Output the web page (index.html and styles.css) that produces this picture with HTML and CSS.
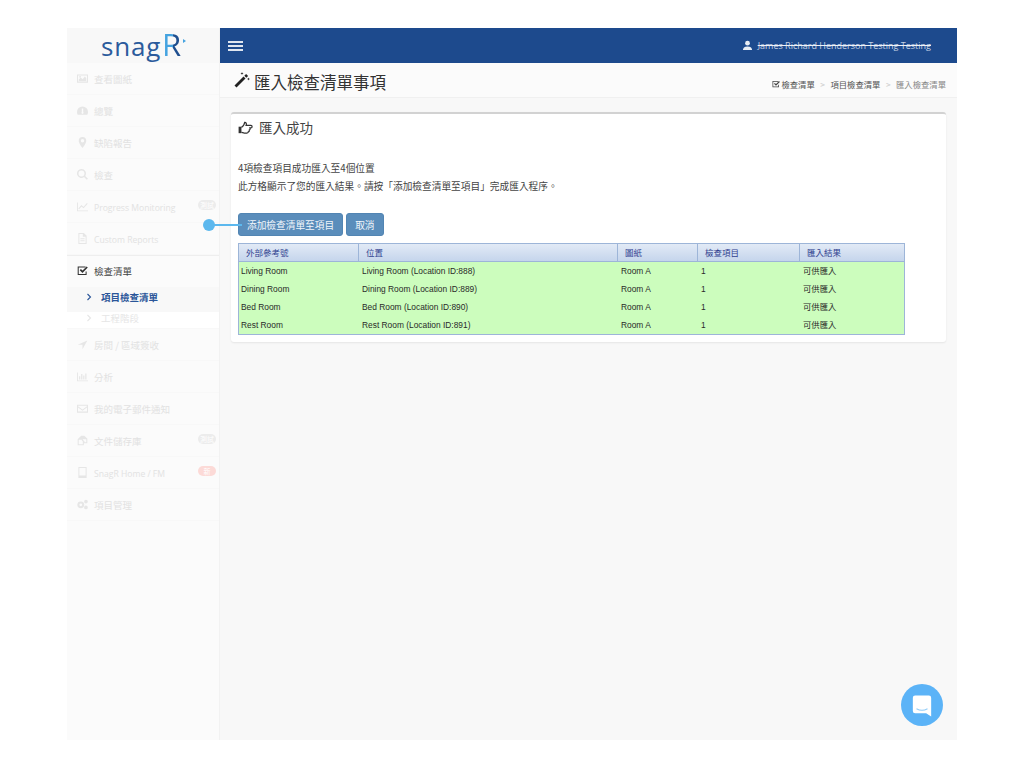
FILE: index.html
```html
<!DOCTYPE html>
<html lang="en">
<head>
    <meta charset="UTF-8">
    <meta name="viewport" content="width=device-width, initial-scale=1.0">
    <title>匯入檢查清單事項</title>
    <link rel="stylesheet" href="styles.css">
</head>
<body>
    <div class="app">
        <aside class="sidebar">
            <div class="logo">snag<span class="logo-r">R</span><span class="logo-arrow"></span></div>
            <ul class="menu">
                <li class="menu-item">
                    <svg class="icon" viewBox="0 0 16 16"><path d="M0 2h16v12H0zm1.500 1.500v9h13v-9z" fill-rule="evenodd"/><path d="M2.500 11.500v-2l3-3 2.500 2.500 3.500-4 2 2.500v4z"/><circle cx="4.500" cy="5.500" r="1.300"/></svg>
                    <span>查看圖紙</span>
                </li>
                <li class="menu-item">
                    <svg class="icon" viewBox="0 0 16 16"><path d="M8 2a8 8 0 0 0-8 8c0 1.500.4 2.800 1 4h14c.6-1.200 1-2.500 1-4a8 8 0 0 0-8-8zM7 5h2v5.200a1.500 1.500 0 1 1-2 0z" fill-rule="evenodd"/></svg>
                    <span>總覽</span>
                </li>
                <li class="menu-item">
                    <svg class="icon" viewBox="0 0 16 16"><path d="M8 0a5.500 5.500 0 0 0-5.500 5.500C2.500 9.500 8 16 8 16s5.500-6.500 5.500-10.500A5.500 5.500 0 0 0 8 0zm0 8a2.500 2.500 0 1 1 0-5 2.500 2.500 0 0 1 0 5z" fill-rule="evenodd"/></svg>
                    <span>缺陷報告</span>
                </li>
                <li class="menu-item">
                    <svg class="icon" viewBox="0 0 16 16"><path d="M6.500 0a6.500 6.500 0 1 0 3.700 11.800l4 4 1.800-1.800-4-4A6.500 6.500 0 0 0 6.500 0zm0 2.200a4.300 4.300 0 1 1 0 8.600 4.300 4.300 0 0 1 0-8.600z" fill-rule="evenodd"/></svg>
                    <span>檢查</span>
                </li>
                <li class="menu-item">
                    <svg class="icon" viewBox="0 0 16 16"><path d="M0 2h1.300v11.700H16V15H0z"/><path d="M2.500 11.500l4-4.500 3 2.500 5.500-6" fill="none" stroke="currentColor" stroke-width="1.500"/></svg>
                    <span class="latin">Progress Monitoring</span>
                    <span class="badge">測試</span>
                </li>
                <li class="menu-item">
                    <svg class="icon" viewBox="0 0 16 16"><path d="M2 0h8l4 4v12H2zm1.500 1.500v13h9V5.500H8.500v-4z" fill-rule="evenodd"/><path d="M5 7.500h6V9H5zM5 10.500h6V12H5z"/></svg>
                    <span class="latin">Custom Reports</span>
                </li>
                <li class="menu-item menu-open">
                    <svg class="icon" viewBox="0 0 16 16"><path d="M1 2h11.500v1.500h-10v9.500h10V9.500H14V14.500H1z"/><path d="M4 7.500l1.700-1.700 2.300 2.300 6-6L15.700 3.800 8 11.500z"/></svg>
                    <span>檢查清單</span>
                </li>
                <li class="sub-item sub-active">
                    <svg class="chevron" viewBox="0 0 8 8"><path d="M2.500 1l3 3-3 3" fill="none" stroke="currentColor" stroke-width="1.100"/></svg>
                    <span>項目檢查清單</span>
                </li>
                <li class="sub-item sub-faded">
                    <svg class="chevron" viewBox="0 0 8 8"><path d="M2.500 1l3 3-3 3" fill="none" stroke="currentColor" stroke-width="1.100"/></svg>
                    <span>工程階段</span>
                </li>
                <li class="menu-item">
                    <svg class="icon" viewBox="0 0 16 16"><path d="M15 2L8 15V8.500H1z"/></svg>
                    <span>房間 / 區域簽收</span>
                </li>
                <li class="menu-item">
                    <svg class="icon" viewBox="0 0 16 16"><path d="M0 2h1.300v11.700H16V15H0z"/><path d="M3 7.500h1.800v5H3zM6 4.500h1.800v8H6zM9 6.500h1.800v6H9zM12 3.500h1.800v9H12z"/></svg>
                    <span>分析</span>
                </li>
                <li class="menu-item">
                    <svg class="icon" viewBox="0 0 16 16"><path d="M0 2.500h16V14H0zm1.500 1.500v.8L8 9.500l6.500-4.700V4zm0 2.700v5.800h13V6.700L8 11.400z" fill-rule="evenodd"/></svg>
                    <span>我的電子郵件通知</span>
                </li>
                <li class="menu-item">
                    <svg class="icon" viewBox="0 0 16 16"><path d="M6 1h4.500L15 5v7h-5v3H1V6zM7 2.500V7H2.500v6.500h6v-4L7 8zM8.500 2.500V7L11 9.500v1h2.500V6H8.500z" fill-rule="evenodd"/></svg>
                    <span>文件儲存庫</span>
                    <span class="badge">測試</span>
                </li>
                <li class="menu-item">
                    <svg class="icon" viewBox="0 0 16 16"><path d="M2 0h12v16H2zm1.500 1.500v11h9v-11z" fill-rule="evenodd"/></svg>
                    <span class="latin">SnagR Home / FM</span>
                    <span class="badge badge-new">新</span>
                </li>
                <li class="menu-item">
                    <svg class="icon" viewBox="0 0 16 16"><path d="M5.500 3.500a5 5 0 1 0 0 10 5 5 0 0 0 0-10zm0 3a2 2 0 1 1 0 4 2 2 0 0 1 0-4z" fill-rule="evenodd"/><path d="M13 1a2.700 2.700 0 1 0 0 5.400A2.700 2.700 0 0 0 13 1zm0 8.600a2.700 2.700 0 1 0 0 5.400 2.700 2.700 0 0 0 0-5.400z"/></svg>
                    <span>項目管理</span>
                </li>
            </ul>
        </aside>

        <div class="main">
            <header class="topbar">
                <div class="burger"><span></span><span></span><span></span></div>
                <div class="user">
                    <svg class="user-icon" viewBox="0 0 12 12"><circle cx="6" cy="3.500" r="2.600"/><path d="M1 11c0-2.500 1.500-4 5-4s5 1.500 5 4z"/></svg>
                    <span class="user-name">James Richard Henderson Testing Testing</span>
                </div>
            </header>

            <div class="page-title">
                <h1>
                    <svg class="wand" viewBox="0 0 16 16"><path d="M0.500 13.500L9.500 4.500l2 2-9 9z"/><path d="M10.300 3.700l1.800-1.800 2 2-1.800 1.800z"/><path d="M8 0l.4 1.100 1.100.4-1.100.4L8 3l-.4-1.100-1.100-.4 1.100-.4zM14.500 5.500l.4 1.100 1.100.4-1.100.4-.4 1.100-.4-1.100-1.100-.4 1.100-.4z"/></svg>
                    匯入檢查清單事項
                </h1>
                <div class="breadcrumb">
                    <svg class="crumb-icon" viewBox="0 0 16 16"><path d="M1 2h11.500v1.500h-10v9.500h10V9.500H14V14.500H1z"/><path d="M4 7.500l1.700-1.700 2.300 2.300 6-6L15.700 3.800 8 11.500z"/></svg>
                    <span>檢查清單</span>
                    <span class="crumb-sep">&gt;</span>
                    <span>項目檢查清單</span>
                    <span class="crumb-sep">&gt;</span>
                    <span class="crumb-last">匯入檢查清單</span>
                </div>
            </div>

            <div class="card">
                <h2>
                    <svg class="hand" viewBox="0 0 18 16"><path d="M0.500 7h3.500v8H0.500z"/><path d="M4 7.800c2.300-1 3.500-3 4-6 2.200 0 2.500 2 1.700 3.700h6c1.900 0 1.900 3 0 3h-1.200c.5 1.300 0 2.300-.8 2.600.2 1.200-.4 2-1.200 2.200 0 1-.7 1.500-1.800 1.500H7.500c-1.300 0-2.300-.7-3.500-.8" fill="none" stroke="currentColor" stroke-width="1.500"/></svg>
                    匯入成功
                </h2>
                <p class="summary">4項檢查項目成功匯入至4個位置</p>
                <p class="summary">此方格顯示了您的匯入結果。請按「添加檢查清單至項目」完成匯入程序。</p>
                <div class="actions">
                    <button type="button" class="btn">添加檢查清單至項目</button>
                    <button type="button" class="btn">取消</button>
                </div>
                <table class="result-table">
                    <thead>
                        <tr>
                            <th class="col-ref">外部參考號</th>
                            <th class="col-loc">位置</th>
                            <th class="col-plan">圖紙</th>
                            <th class="col-item">檢查項目</th>
                            <th>匯入結果</th>
                        </tr>
                    </thead>
                    <tbody>
                        <tr><td>Living Room</td><td>Living Room (Location ID:888)</td><td>Room A</td><td>1</td><td>可供匯入</td></tr>
                        <tr><td>Dining Room</td><td>Dining Room (Location ID:889)</td><td>Room A</td><td>1</td><td>可供匯入</td></tr>
                        <tr><td>Bed Room</td><td>Bed Room (Location ID:890)</td><td>Room A</td><td>1</td><td>可供匯入</td></tr>
                        <tr><td>Rest Room</td><td>Rest Room (Location ID:891)</td><td>Room A</td><td>1</td><td>可供匯入</td></tr>
                    </tbody>
                </table>
            </div>
        </div>

        <div class="hint"><span class="hint-dot"></span><span class="hint-line"></span></div>

        <div class="chat">
            <svg viewBox="0 0 24 24" class="chat-icon"><path d="M2 3.500A2.500 2.500 0 0 1 4.500 1h15A2.500 2.500 0 0 1 22 3.500V24l-5.500-3.500h-12A2.500 2.500 0 0 1 2 18z" fill="#fff"/><path d="M6 15.500c3.500 2 8.500 2 12 0" fill="none" stroke="#8fcbf8" stroke-width="1.100"/></svg>
        </div>
    </div>
</body>
</html>
```

FILE: styles.css
```css
* {
    box-sizing: border-box;
}
body {
    margin: 0;
    background-color: #fff;
    font-family: "Noto Sans CJK TC", sans-serif;
    color: #444;
}
.app {
    position: relative;
    display: flex;
    width: 890px;
    height: 712px;
    margin: 28px 0 0 67px;
    background-color: #f8f8f8;
}

/* sidebar */
.sidebar {
    width: 153px;
    flex-shrink: 0;
    background-color: #fbfbfb;
    border-right: 1px solid #f2f2f2;
}
.logo {
    display: flex;
    align-items: baseline;
    height: 35px;
    padding-left: 34px;
    background-color: #f8f8f8;
    font-family: "Open Sans", sans-serif;
    font-size: 26px;
    line-height: 33px;
    letter-spacing: 0.8px;
    color: #2b5b9c;
}
.logo-r {
    margin-left: 1px;
    font-size: 31px;
    background: linear-gradient(to right, #45a3e0 55%, #1f4f8f 56%);
    -webkit-background-clip: text;
    background-clip: text;
    color: transparent;
}
.logo-arrow {
    align-self: flex-start;
    margin: 11px 0 0 1px;
    border-left: 3px solid #45a3e0;
    border-top: 2px solid transparent;
    border-bottom: 2px solid transparent;
}
.menu {
    margin: 0;
    padding: 0;
    list-style: none;
}
.menu-item {
    display: flex;
    align-items: center;
    height: 32px;
    padding: 0 3px 0 10px;
    border-bottom: 1px solid #f8f8f8;
    font-size: 9.500px;
    color: #e2e2e2;
}
.menu-item .icon {
    width: 11px;
    height: 11px;
    margin-right: 6px;
    fill: currentColor;
    color: #e6e6e6;
    flex-shrink: 0;
}
.latin {
    padding-top: 2px;
    font-family: "Open Sans", sans-serif;
    font-size: 8.600px;
}
.badge {
    width: 18px;
    height: 10px;
    margin-left: auto;
    margin-bottom: 3px;
    border-radius: 5px;
    background-color: #ececec;
    color: #fff;
    font-size: 7px;
    line-height: 10px;
    text-align: center;
}
.badge-new {
    background-color: #fcdad7;
}
.menu-open {
    padding-bottom: 2px;
    color: #444;
    border-top: 1px solid #eee;
    border-bottom: none;
}
.menu-open .icon {
    color: #333;
}
.sub-item {
    display: flex;
    align-items: center;
    padding-left: 18px;
    font-size: 9.500px;
}
.sub-item .chevron {
    width: 8px;
    height: 8px;
    margin-right: 8px;
}
.sub-active {
    height: 25px;
    padding-bottom: 5px;
    background-color: #f8f8f8;
    font-weight: 700;
    color: #2a5599;
}
.sub-faded {
    height: 17px;
    padding-bottom: 4px;
    background-color: #fff;
    border-bottom: 1px solid #f8f8f8;
    color: #e6e6e6;
}

/* top bar */
.main {
    flex: 1;
    min-width: 0;
}
.topbar {
    display: flex;
    justify-content: space-between;
    align-items: center;
    height: 35px;
    padding: 0 26px 0 8px;
    background-color: #1d4a8d;
}
.burger {
    display: flex;
    flex-direction: column;
    gap: 2px;
    width: 15px;
}
.burger span {
    height: 2px;
    background-color: #dfe6f0;
}
.user {
    display: flex;
    align-items: center;
    gap: 5px;
    color: #c6d2e4;
}
.user-icon {
    width: 11px;
    height: 11px;
    fill: #e8edf4;
}
.user-name {
    font-family: "Open Sans", sans-serif;
    font-size: 9px;
    text-decoration: line-through;
    text-decoration-color: #eef2f7;
}

/* page title */
.page-title {
    display: flex;
    justify-content: space-between;
    align-items: center;
    height: 35px;
    padding: 0 11px 0 14px;
    background-color: #fbfbfb;
    border-bottom: 1px solid #f0f0f0;
}
h1 {
    display: flex;
    align-items: center;
    gap: 4px;
    margin: 4px 0 0;
    font-size: 16.500px;
    font-weight: 400;
    color: #333;
}
.wand {
    width: 16px;
    height: 16px;
    fill: #222;
    margin-bottom: 4px;
}
.breadcrumb {
    display: flex;
    align-items: center;
    gap: 5.500px;
    margin-top: 8px;
    font-size: 8.330px;
    color: #555;
}
.crumb-icon {
    width: 8px;
    height: 8px;
    margin-right: -4.500px;
    fill: #444;
}
.crumb-sep {
    color: #ccc;
}
.crumb-last {
    color: #888;
}

/* card */
.card {
    width: 715px;
    height: 230px;
    margin: 14px 0 0 11px;
    padding: 0 7px;
    background-color: #fff;
    border-top: 2px solid #d2d2d2;
    border-radius: 3px;
    box-shadow: 0 1px 2px rgba(0, 0, 0, 0.08);
}
h2 {
    display: flex;
    align-items: center;
    gap: 6px;
    height: 26px;
    margin: 0 0 20px;
    font-size: 13.500px;
    font-weight: 400;
    color: #444;
}
.hand {
    width: 15px;
    height: 13px;
    fill: #333;
    color: #333;
}
.summary {
    margin: 0;
    height: 17.500px;
    font-size: 9.700px;
    line-height: 17.500px;
    color: #444;
}
.actions {
    display: flex;
    gap: 3px;
    margin-top: 18px;
}
.btn {
    height: 23px;
    padding: 0 8px;
    background-color: #5a8dbb;
    border: 1px solid #5285b3;
    border-radius: 3px;
    color: #f0f5fa;
    font-family: "Noto Sans CJK TC", sans-serif;
    font-size: 9.700px;
}

/* result table */
.result-table {
    width: 667px;
    margin-top: 7px;
    border-collapse: separate;
    border-spacing: 0;
    table-layout: fixed;
    background-color: #ccfdbd;
    border: 1px solid #9db5d8;
}
.result-table th {
    height: 18px;
    padding: 0 0 2px 7px;
    background: linear-gradient(#e2eaf6, #c5d5ec);
    border-right: 1px solid #9db5d8;
    border-bottom: 1px solid #9db5d8;
    font-size: 8.500px;
    font-weight: 400;
    line-height: 12px;
    text-align: left;
    color: #2f3f8f;
}
.result-table th:last-child {
    border-right: none;
}
.result-table td {
    height: 18px;
    padding: 0 0 0 3px;
    font-family: "Liberation Sans", "Noto Sans CJK TC", sans-serif;
    font-size: 8.400px;
    line-height: 12px;
    color: #2a2a2a;
}
.result-table td:first-child {
    padding-left: 2px;
}
.col-ref {
    width: 120px;
}
.col-loc {
    width: 259px;
}
.col-plan {
    width: 80px;
}
.col-item {
    width: 102px;
}

/* overlays */
.hint {
    position: absolute;
    left: 136px;
    top: 191px;
    display: flex;
    align-items: center;
}
.hint-dot {
    width: 12px;
    height: 12px;
    border-radius: 50%;
    background-color: #5cb8ee;
}
.hint-line {
    width: 28px;
    height: 2.500px;
    margin-left: -1px;
    background-color: #5cb8ee;
}
.chat {
    position: absolute;
    left: 834px;
    top: 656px;
    display: flex;
    align-items: center;
    justify-content: center;
    width: 42px;
    height: 42px;
    border-radius: 50%;
    background-color: #5bb3f7;
}
.chat-icon {
    width: 22px;
    height: 23px;
}
```
